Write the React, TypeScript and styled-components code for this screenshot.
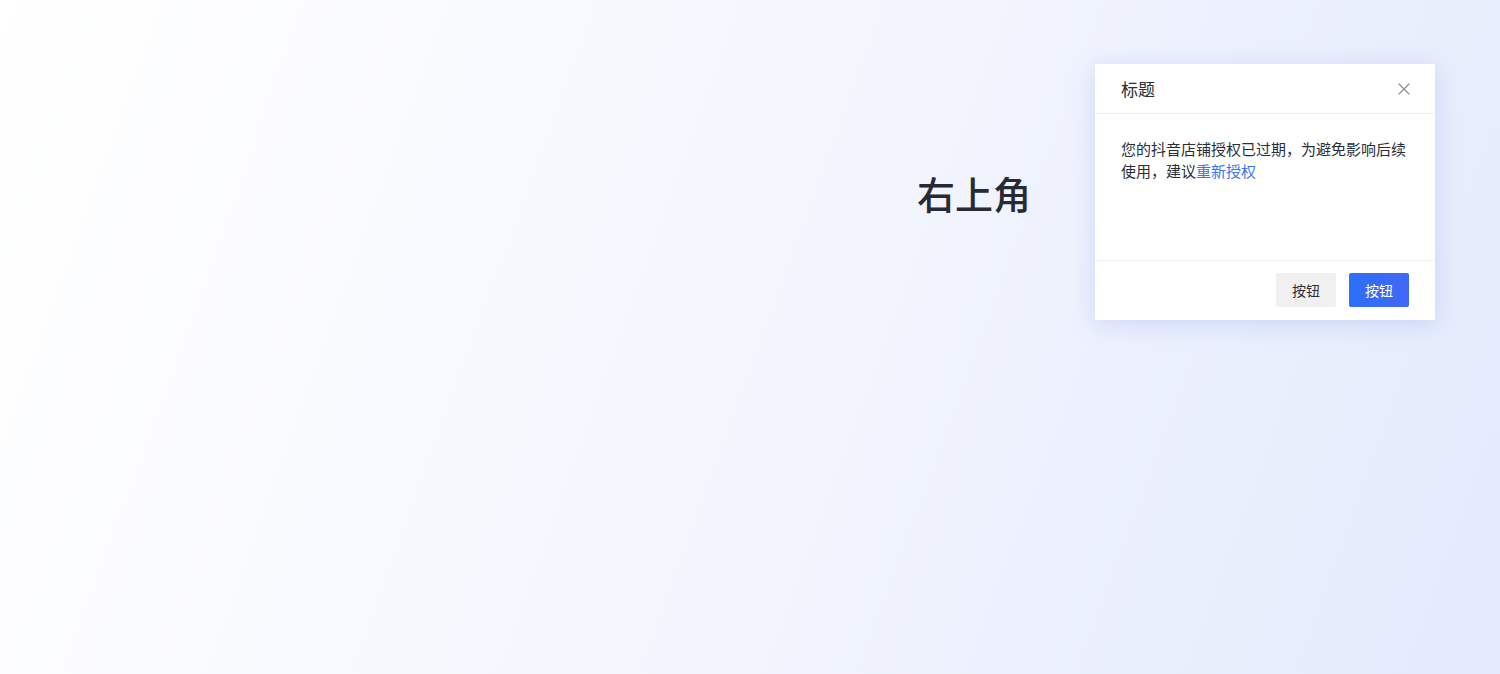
import React from "react";
import styled, { createGlobalStyle } from "styled-components";

const GlobalStyle = createGlobalStyle`
  html, body {
    margin: 0;
    padding: 0;
  }
  body {
    font-family: "Noto Sans CJK SC", "Noto Sans", sans-serif;
    color: #2b2e38;
  }
`;

const Page = styled.div`
  position: relative;
  width: 1500px;
  height: 674px;
  overflow: hidden;
  background: linear-gradient(110deg, #ffffff 0%, #f4f6fe 50%, #e3eafc 100%);
`;

const Stage = styled.div`
  display: flex;
  padding: 167px 0 0 917px;
`;

const Heading = styled.h1`
  margin: 0;
  font-size: 38px;
  font-weight: 500;
  line-height: 52px;
  color: #272a35;
`;

const Notice = styled.div`
  position: absolute;
  top: 64px;
  right: 65px;
  width: 340px;
  height: 256px;
  background: #ffffff;
  display: flex;
  flex-direction: column;
  box-shadow: 0 4px 22px rgba(120, 150, 235, 0.28);
`;

const Header = styled.div`
  height: 49px;
  display: flex;
  align-items: center;
  justify-content: space-between;
  padding: 0 24px 0 26px;
  border-bottom: 1px solid #eef0f4;
`;

const Title = styled.div`
  font-size: 17px;
  color: #2b2e38;
`;

const CloseButton = styled.button`
  border: none;
  background: none;
  padding: 0;
  width: 14px;
  height: 14px;
  display: flex;
  align-items: center;
  justify-content: center;
  cursor: pointer;
`;

const Body = styled.div`
  flex: 1;
  padding: 24px 26px 0;
  font-size: 15px;
  line-height: 22px;
  color: #2b2e38;
`;

const Link = styled.a`
  color: #3a73f6;
  text-decoration: none;
`;

const Footer = styled.div`
  height: 60px;
  box-sizing: border-box;
  border-top: 1px solid #eef0f4;
  display: flex;
  align-items: flex-start;
  justify-content: flex-end;
  gap: 13px;
  padding: 12px 26px 0;
`;

const Button = styled.button<{ $primary?: boolean }>`
  width: 60px;
  height: 34px;
  border: none;
  border-radius: 2px;
  font-family: inherit;
  font-size: 14px;
  cursor: pointer;
  color: ${(p) => (p.$primary ? "#ffffff" : "#2b2e38")};
  background: ${(p) =>
    p.$primary ? "linear-gradient(90deg, #2c6ff8, #4167f5)" : "#f0f0f1"};
`;

export default function App() {
  return (
    <Page>
      <GlobalStyle />
      <Stage>
        <Heading>右上角</Heading>
      </Stage>
      <Notice>
        <Header>
          <Title>标题</Title>
          <CloseButton aria-label="关闭">
            <svg width="12" height="12" viewBox="0 0 12 12">
              <path
                d="M1 1L11 11M11 1L1 11"
                stroke="#8b8f99"
                strokeWidth="1.2"
                strokeLinecap="round"
              />
            </svg>
          </CloseButton>
        </Header>
        <Body>
          您的抖音店铺授权已过期，为避免影响后续使用，建议
          <Link href="#">重新授权</Link>
        </Body>
        <Footer>
          <Button>按钮</Button>
          <Button $primary>按钮</Button>
        </Footer>
      </Notice>
    </Page>
  );
}
